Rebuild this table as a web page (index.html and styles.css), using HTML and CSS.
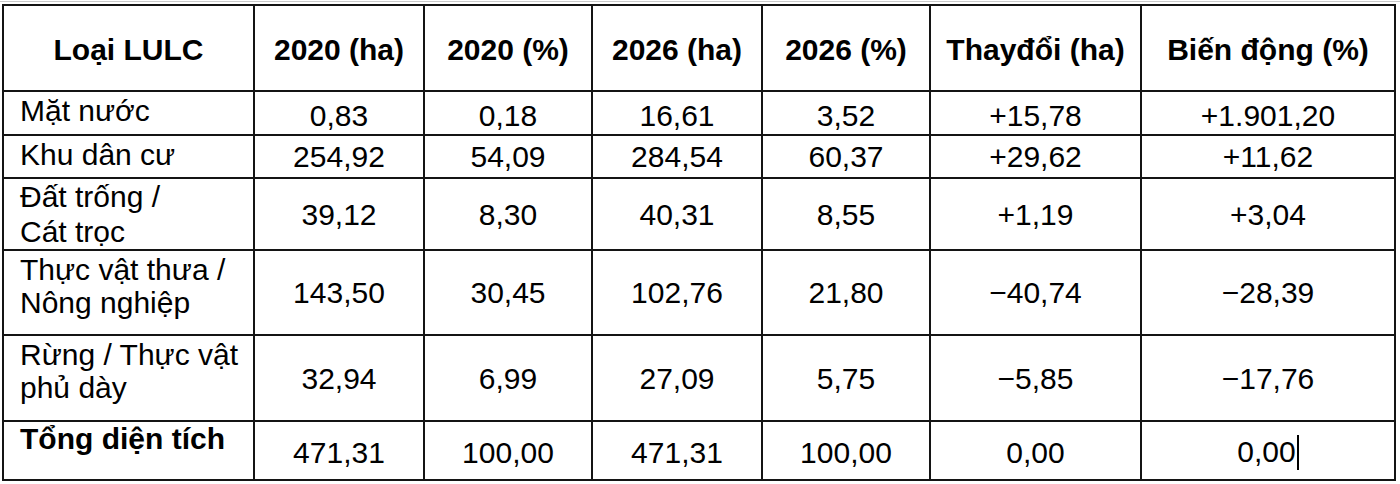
FILE: index.html
```html
<!DOCTYPE html>
<html lang="vi">
<head>
<meta charset="utf-8">
<title>Bảng biến động LULC</title>
<link rel="stylesheet" href="styles.css">
</head>
<body>
<div class="frame">
<table class="lulc">
  <colgroup>
    <col class="c-name">
    <col class="c-a">
    <col class="c-b">
    <col class="c-a">
    <col class="c-b">
    <col class="c-chg">
    <col class="c-var">
  </colgroup>
  <thead>
    <tr class="r-head">
      <th>Loại LULC</th>
      <th>2020 (ha)</th>
      <th>2020 (%)</th>
      <th>2026 (ha)</th>
      <th>2026 (%)</th>
      <th>Thayđổi (ha)</th>
      <th>Biến động (%)</th>
    </tr>
  </thead>
  <tbody>
    <tr class="r1">
      <td class="name">Mặt nước</td>
      <td>0,83</td><td>0,18</td><td>16,61</td><td>3,52</td><td>+15,78</td><td>+1.901,20</td>
    </tr>
    <tr class="r2">
      <td class="name">Khu dân cư</td>
      <td>254,92</td><td>54,09</td><td>284,54</td><td>60,37</td><td>+29,62</td><td>+11,62</td>
    </tr>
    <tr class="r3">
      <td class="name name-tight">Đất trống /<br>Cát trọc</td>
      <td>39,12</td><td>8,30</td><td>40,31</td><td>8,55</td><td>+1,19</td><td>+3,04</td>
    </tr>
    <tr class="r4">
      <td class="name">Thực vật thưa /<br>Nông nghiệp</td>
      <td>143,50</td><td>30,45</td><td>102,76</td><td>21,80</td><td>−40,74</td><td>−28,39</td>
    </tr>
    <tr class="r5">
      <td class="name">Rừng / Thực vật<br>phủ dày</td>
      <td>32,94</td><td>6,99</td><td>27,09</td><td>5,75</td><td>−5,85</td><td>−17,76</td>
    </tr>
    <tr class="r6">
      <td class="name total name-tight">Tổng diện tích</td>
      <td>471,31</td><td>100,00</td><td>471,31</td><td>100,00</td><td>0,00</td><td>0,00<span class="caret"></span></td>
    </tr>
  </tbody>
</table>
</div>
</body>
</html>
```

FILE: styles.css
```css
html, body {
  margin: 0;
  padding: 0;
  background: #ffffff;
}

.frame {
  border-top: 1px solid #c9c9c9;
  margin-top: 1px;
  padding-top: 2px;
  padding-left: 2px;
}

.lulc {
  border-collapse: collapse;
  table-layout: fixed;
  width: 1394px;
  font-family: "Liberation Sans", Arial, sans-serif;
  font-size: 30px;
  line-height: 33px;
  color: #000;
}

.c-name { width: 251px; }
.c-a { width: 170px; }
.c-b { width: 168px; }
.c-chg { width: 211px; }
.c-var { width: 254px; }

.lulc th,
.lulc td {
  border: 2px solid #141414;
  padding: 0;
  text-align: center;
  vertical-align: middle;
}

.lulc th {
  font-weight: bold;
  padding-top: 3px;
}

.lulc td.name {
  text-align: left;
  vertical-align: top;
  padding: 2px 0 0 16px;
}

.lulc td.name-tight {
  padding-top: 0;
  line-height: 35px;
}

.lulc td.total {
  font-weight: bold;
  line-height: 34px;
}

.r-head { height: 86px; }
.r1 { height: 44px; }
.r2 { height: 43px; }
.r3 { height: 72px; }
.r4 { height: 85px; }
.r5 { height: 86px; }
.r6 { height: 59px; }

.r1 td:not(.name) { padding-top: 4px; }
.r6 td:not(.name) { padding-top: 4px; }

.caret {
  display: inline-block;
  width: 0;
  height: 35px;
  border-left: 2px solid #000;
  margin-left: 1px;
  vertical-align: -8px;
}
```
